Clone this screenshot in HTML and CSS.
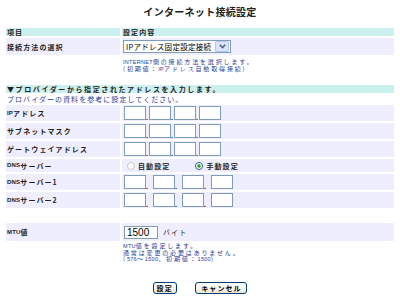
FILE: index.html
```html
<!DOCTYPE html>
<html lang="ja">
<head>
    <meta charset="UTF-8">
    <meta name="viewport" content="width=device-width, initial-scale=1.0">
    <title>インターネット接続設定</title>
    <link rel="stylesheet" href="styles.css">
</head>
<body>
    <h1 class="title">インターネット接続設定</h1>

    <form id="wanForm" class="form-rows">
        <!-- Header -->
        <div class="row row-head">
            <div class="cell">項目</div>
            <div class="cell">設定内容</div>
        </div>

        <!-- Connection type -->
        <div class="row row-item tall">
            <div class="cell">接続方法の選択</div>
            <div class="cell">
                <div class="select-box">
                    <span class="select-text">IPアドレス固定設定接続</span>
                    <span class="select-arrow">
                        <svg width="7" height="5" viewBox="0 0 7 5"><polyline points="0.8,0.8 3.5,3.6 6.2,0.8" fill="none" stroke="#4d6185" stroke-width="1.5"/></svg>
                    </span>
                </div>
            </div>
        </div>
        <div class="row row-note type-note">
            <div></div>
            <div class="note"><span class="en">INTERNET</span>側の接続方法を選択します。<br>(初期値：<span class="en">IP</span>アドレス自動取得接続)</div>
        </div>

        <!-- Provider section -->
        <div class="section-head">▼プロバイダーから指定されたアドレスを入力します。</div>
        <div class="section-hint">プロバイダーの資料を参考に設定してください。</div>

        <div class="row row-item">
            <div class="cell"><span class="en">IP</span>アドレス</div>
            <div class="cell">
                <div class="ip-field">
                    <input class="octet" type="text" name="ip1"><span class="dot">.</span>
                    <input class="octet" type="text" name="ip2"><span class="dot">.</span>
                    <input class="octet" type="text" name="ip3"><span class="dot">.</span>
                    <input class="octet" type="text" name="ip4">
                </div>
            </div>
        </div>
        <div class="row row-item">
            <div class="cell">サブネットマスク</div>
            <div class="cell">
                <div class="ip-field">
                    <input class="octet" type="text" name="mask1"><span class="dot">.</span>
                    <input class="octet" type="text" name="mask2"><span class="dot">.</span>
                    <input class="octet" type="text" name="mask3"><span class="dot">.</span>
                    <input class="octet" type="text" name="mask4">
                </div>
            </div>
        </div>
        <div class="row row-item">
            <div class="cell">ゲートウェイアドレス</div>
            <div class="cell">
                <div class="ip-field">
                    <input class="octet" type="text" name="gw1"><span class="dot">.</span>
                    <input class="octet" type="text" name="gw2"><span class="dot">.</span>
                    <input class="octet" type="text" name="gw3"><span class="dot">.</span>
                    <input class="octet" type="text" name="gw4">
                </div>
            </div>
        </div>

        <!-- DNS -->
        <div class="row row-item short">
            <div class="cell"><span class="en">DNS</span>サーバー</div>
            <div class="cell">
                <label class="radio-label"><input class="radio" type="radio" name="dnsMode" value="auto" disabled>自動設定</label>
                <label class="radio-label"><input class="radio" type="radio" name="dnsMode" value="manual" checked>手動設定</label>
            </div>
        </div>
        <div class="row row-item">
            <div class="cell"><span class="en">DNS</span>サーバー1</div>
            <div class="cell">
                <div class="ip-field wide">
                    <input class="octet" type="text" name="dns1a"><span class="dot">.</span>
                    <input class="octet" type="text" name="dns1b"><span class="dot">.</span>
                    <input class="octet" type="text" name="dns1c"><span class="dot">.</span>
                    <input class="octet" type="text" name="dns1d">
                </div>
            </div>
        </div>
        <div class="row row-item">
            <div class="cell"><span class="en">DNS</span>サーバー2</div>
            <div class="cell">
                <div class="ip-field wide">
                    <input class="octet" type="text" name="dns2a"><span class="dot">.</span>
                    <input class="octet" type="text" name="dns2b"><span class="dot">.</span>
                    <input class="octet" type="text" name="dns2c"><span class="dot">.</span>
                    <input class="octet" type="text" name="dns2d">
                </div>
            </div>
        </div>

        <!-- MTU -->
        <div class="row row-item mtu">
            <div class="cell"><span class="en">MTU</span>値</div>
            <div class="cell">
                <input class="mtu-input" type="text" name="mtu" value="1500"><span class="unit">バイト</span>
            </div>
        </div>
        <div class="row row-note mtu-note">
            <div></div>
            <div class="note"><span class="en">MTU</span>値を設定します。<br>通常は変更の必要はありません。<br>(<span class="en">576</span>～<span class="en">1500</span>，初期値：<span class="en">1500</span>)</div>
        </div>

        <div class="buttons">
            <button type="submit" class="btn">設定</button>
            <button type="reset" class="btn btn-cancel">キャンセル</button>
        </div>
    </form>
</body>
</html>
```

FILE: styles.css
```css
body {
    margin: 0;
    font-family: "Noto Sans CJK JP", sans-serif;
    font-size: 7px;
    letter-spacing: 1.1px;
    color: #222;
    background-color: #fff;
}
.title {
    margin: 0;
    padding-top: 7px;
    height: 21px;
    font-size: 10px;
    line-height: 10px;
    letter-spacing: 0.3px;
    text-align: center;
    color: #222;
}
.en {
    font-family: "Liberation Sans", sans-serif;
    font-size: 6px;
    line-height: 5px;
    letter-spacing: 0.2px;
}
.form-rows {
    display: flex;
    flex-direction: column;
    gap: 2px;
    width: 388px;
    margin-left: 6px;
}
.row {
    display: grid;
    grid-template-columns: 114px 272px;
    column-gap: 2px;
    height: 16px;
}
.cell {
    display: flex;
    align-items: center;
    padding-left: 1px;
    overflow: hidden;
    white-space: nowrap;
    line-height: 8px;
}
.row-head {
    height: 8px;
}
.row-head .cell {
    background-color: #ccf0ee;
    font-weight: bold;
}
.row-item .cell {
    background-color: #eeeeff;
    font-weight: bold;
}
.row-item.tall {
    height: 17px;
}
.row-item.short {
    height: 13px;
}
.row-item.mtu {
    height: 18px;
    margin-top: 13px;
}
.row-note .note {
    padding-left: 1px;
    white-space: nowrap;
}
.type-note {
    height: 26px;
    padding-top: 2px;
    box-sizing: border-box;
}
.mtu-note {
    height: 20px;
}
.note {
    color: #1f3c96;
    font-size: 6px;
    line-height: 6.5px;
    letter-spacing: 1.85px;
}
.note .en {
    font-size: 5.5px;
    letter-spacing: 0.3px;
}
.section-head {
    height: 8px;
    padding-left: 1px;
    background-color: #ccf0ee;
    font-weight: bold;
    line-height: 8px;
    letter-spacing: 1.6px;
    white-space: nowrap;
    overflow: hidden;
}
.section-hint {
    height: 8px;
    padding-left: 1px;
    color: #1f3c96;
    line-height: 8px;
    letter-spacing: 1.05px;
    white-space: nowrap;
}

/* select */
.select-box {
    display: flex;
    align-items: center;
    justify-content: space-between;
    width: 108px;
    height: 13px;
    box-sizing: border-box;
    border: 1px solid #7f9db9;
    background-color: #fff;
}
.select-text {
    padding-left: 2px;
    font-size: 7.6px;
    font-weight: normal;
    line-height: 11px;
    letter-spacing: 0.2px;
    white-space: nowrap;
    color: #000;
}
.select-arrow {
    display: flex;
    align-items: center;
    justify-content: center;
    flex: none;
    width: 12px;
    height: 9px;
    margin-right: 1px;
    border: 1px solid #b7c6ee;
    border-radius: 1px;
    background-color: #d9e3fb;
}

/* ip address inputs */
.ip-field {
    display: flex;
    align-items: flex-end;
    margin-left: 1px;
}
.octet {
    width: 22px;
    height: 14px;
    box-sizing: border-box;
    margin: 0;
    padding: 0 2px;
    border: 1px solid #7f9db9;
    background-color: #fff;
    font-size: 9px;
}
.dot {
    width: 3px;
    font-family: "Liberation Sans", sans-serif;
    font-size: 7px;
    line-height: 5px;
    letter-spacing: 0;
    color: #000;
}
.ip-field.wide .dot {
    width: 7px;
}

/* radio */
.radio-label {
    display: inline-flex;
    align-items: center;
    margin-right: 21px;
}
.radio {
    appearance: none;
    width: 8px;
    height: 8px;
    margin: 0 3px 0 4px;
    border: 1px solid #c8c8c8;
    border-radius: 50%;
    background-color: #fff;
}
.radio:checked {
    border-color: #2f5f93;
    background: radial-gradient(circle, #22a322 1.4px, #fff 1.9px);
}

/* mtu */
.mtu-input {
    width: 34px;
    height: 13px;
    box-sizing: border-box;
    margin: 0 0 0 1px;
    padding: 0 2px;
    border: 1px solid #7f9db9;
    font-family: "Liberation Sans", sans-serif;
    font-size: 10px;
    letter-spacing: 0;
    color: #000;
}
.unit {
    margin-left: 5px;
    font-weight: normal;
}

/* buttons */
.buttons {
    margin-top: 17px;
    text-align: center;
}
.btn {
    height: 12px;
    margin: 0 8px;
    padding: 0 3px;
    border: 1px solid #003c74;
    border-radius: 3px;
    background: linear-gradient(#ffffff, #ece9d8);
    font-family: "Noto Sans CJK JP", sans-serif;
    font-size: 7px;
    font-weight: bold;
    line-height: 10px;
    letter-spacing: 1.1px;
    color: #000;
    vertical-align: top;
}
.btn-cancel {
    width: 52px;
}
```
